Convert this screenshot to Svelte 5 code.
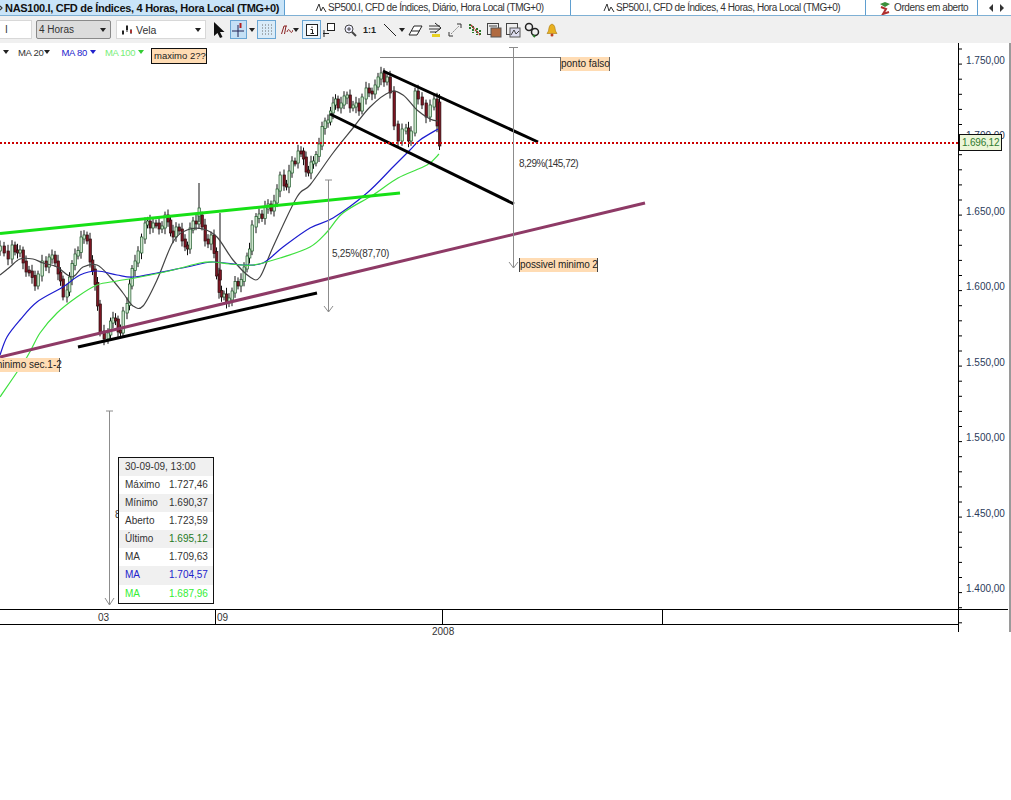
<script>
  const rawKeys = [[0,250],[4,247],[8,252],[12,258],[15,246],[20,252],[26,262],[32,272],[38,285],[42,275],[46,262],[52,258],[58,262],[63,280],[67,296],[72,278],[78,255],[84,238],[90,240],[95,270],[100,305],[104,332],[108,338],[113,322],[118,320],[123,332],[127,312],[132,285],[138,262],[145,238],[150,222],[156,224],[162,228],[168,216],[173,232],[179,228],[185,240],[190,248],[196,222],[202,216],[208,240],[214,236],[219,275],[224,296],[229,302],[235,292],[241,285],[247,268],[252,250],[256,226],[262,215],[268,208],[274,210],[280,190],[284,176],[289,186],[295,162],[301,152],[306,158],[311,172],[316,162],[322,145],[328,122],[333,112],[338,100],[344,104],[350,96],[356,106],[362,110],[366,98],[372,92],[378,86],[384,74],[390,78],[394,92],[398,125],[402,140],[406,130],[411,140],[415,132],[418,92],[422,98],[426,104],[430,116],[434,106],[437,100],[440,125]];
  const wob = [5,-3,6,-4,2,-6,4,-2];
  const keys = [];
  rawKeys.forEach((k, i) => {
    keys.push(k);
    const n = rawKeys[i + 1];
    if (n && n[0] - k[0] >= 5) keys.push([k[0] + (n[0] - k[0]) / 2, (k[1] + n[1]) / 2 + wob[i % 8]]);
  });
  const candles = [];
  for (let i = 0; i < keys.length - 1; i++) {
    const [x, y] = keys[i];
    const ny = keys[i + 1][1];
    const top = Math.min(y, ny) - 1;
    const bot = Math.max(y, ny) + 1;
    candles.push({ x, top, h: Math.max(bot - top, 3), hi: top - 2 - Math.abs(wob[i % 8]) * 0.7, lo: bot + 2 + Math.abs(wob[(i + 3) % 8]) * 0.7, up: ny < y });
  }
  candles.push({ x: 199, top: 208, h: 8, hi: 183, lo: 222, up: true });
  candles.push({ x: 220, top: 270, h: 10, hi: 213, lo: 280, up: false });
  candles.push({ x: 439.5, top: 102, h: 44, hi: 94, lo: 150, up: false });

  function smooth(a) {
    let d = `M${a[0][0]} ${a[0][1]}`;
    for (let i = 0; i < a.length - 1; i++) {
      const p0 = a[Math.max(i - 1, 0)], p1 = a[i], p2 = a[i + 1], p3 = a[Math.min(i + 2, a.length - 1)];
      const c1 = [p1[0] + (p2[0] - p0[0]) / 6, p1[1] + (p2[1] - p0[1]) / 6];
      const c2 = [p2[0] - (p3[0] - p1[0]) / 6, p2[1] - (p3[1] - p1[1]) / 6];
      d += `C${c1[0]} ${c1[1]} ${c2[0]} ${c2[1]} ${p2[0]} ${p2[1]}`;
    }
    return d;
  }
  const black = smooth([[0,275],[10,267],[20,259],[33,259],[43,263],[57,267],[72,277],[83,267],[97,265],[110,277],[123,293],[133,306],[143,306],[157,280],[173,242],[187,230],[203,229],[217,237],[233,260],[250,277],[260,277],[273,247],[297,197],[310,185],[333,153],[353,128],[370,107],[390,92],[403,95],[417,110],[430,119],[438,121]]);
  const blue = smooth([[0,355],[7,337],[20,320],[37,302],[63,287],[80,275],[97,271],[117,275],[133,277],[157,273],[187,267],[213,262],[243,265],[263,263],[283,247],[310,228],[333,218],[367,193],[393,167],[410,150],[420,140],[438,129]]);
  const green = smooth([[0,397],[27,357],[40,333],[57,313],[77,297],[97,285],[117,281],[140,277],[173,270],[200,263],[213,262],[230,264],[253,265],[280,258],[310,247],[327,232],[343,213],[373,195],[398,178],[427,165],[439,154]]);

  const ticks = [];
  for (let i = 0; i < 40; i++) ticks.push(6 + i * 15.1);
  const prices = [
    ['1.750,00', 60], ['1.650,00', 211], ['1.600,00', 286], ['1.550,00', 362],
    ['1.500,00', 437], ['1.450,00', 513], ['1.400,00', 588]
  ];
  const info = [
    ['Máximo', '1.727,46', ''], ['Mínimo', '1.690,37', ''], ['Aberto', '1.723,59', ''],
    ['Último', '1.695,12', 'g'], ['MA', '1.709,63', ''], ['MA', '1.704,57', 'b'], ['MA', '1.687,96', 'l']
  ];
</script>

<div class="app">
  <div class="tabs">
    <div class="tab active">
      <svg class="wave" viewBox="0 0 3 12" width="3" height="12"><path d="M0 4 L2 6 L0 8" fill="none" stroke="#333" stroke-width="1.200"/></svg>
      <span>NAS100.I, CFD de Índices, 4 Horas, Hora Local (TMG+0)</span>
    </div>
    <div class="tab t2">
      <svg viewBox="0 0 12 12" width="12" height="12"><path d="M1 9 L4 2 L6 9 L8 5 L11 10" fill="none" stroke="#333"/></svg>
      <span>SP500.I, CFD de Índices, Diário, Hora Local (TMG+0)</span>
    </div>
    <div class="tab t3">
      <svg viewBox="0 0 12 12" width="12" height="12"><path d="M1 9 L4 2 L6 9 L8 5 L11 10" fill="none" stroke="#333"/></svg>
      <span>SP500.I, CFD de Índices, 4 Horas, Hora Local (TMG+0)</span>
    </div>
    <div class="tab t4">
      <svg viewBox="0 0 14 14" width="14" height="14"><path d="M2 3 L7 1 L12 3 L7 6Z" fill="#3b8f3b"/><path d="M3 6 L8 8 L5 13 L11 11" fill="none" stroke="#b03030" stroke-width="2"/></svg>
      <span>Ordens em aberto</span>
    </div>
    <div class="nav">
      <svg viewBox="0 0 18 10" width="18" height="10"><path d="M5 1 V9 L1 5Z M12 1 V9 L16 5Z" fill="#333"/></svg>
    </div>
  </div>

  <div class="toolbar">
    <div class="field symbol">I</div>
    <div class="field tf"><span>4 Horas</span><i class="caret"></i></div>
    <div class="field kind">
      <svg viewBox="0 0 12 12" width="12" height="12"><path d="M2 6V11M6 1V8M10 5V10" stroke="#222" fill="none"/><path d="M1 7h2v3H1zM5 2h2v4H5z" fill="#222"/><path d="M9 6h2v3H9z" fill="#a33"/></svg>
      <span>Vela</span><i class="caret"></i>
    </div>
    <div class="icons">
      <svg class="ic ml2" viewBox="0 0 14 18" width="14" height="18"><path d="M2 1 V15 L5.500 12 L8 17 L10.500 16 L8 11 L12.500 11Z" fill="#111"/></svg>
      <button class="on cross ml4"><svg viewBox="0 0 15 16" width="15" height="16"><path d="M7 3V15M1 9H13" stroke="#225" fill="none"/><path d="M8.500 1h2v5h-2z" fill="#b02020"/></svg></button>
      <i class="caret small ml2"></i>
      <button class="on grid ml2"><svg viewBox="0 0 14 14" width="14" height="14"><path d="M2 2h10M2 5h10M2 8h10M2 11h10" stroke="#6a6a6a" stroke-dasharray="1 2" fill="none"/></svg></button>
      <svg class="ic ml5" viewBox="0 0 12 14" width="12" height="14"><path d="M0.500 11 L3 3 H6 M5 3 L3.500 11 M6 9 C7 6 8 6 9 8 S11 10 12 7" stroke="#8a2020" fill="none"/></svg>
      <i class="caret small"></i>
      <button class="on inf ml3"><svg viewBox="0 0 14 14" width="14" height="14"><rect x="1.500" y="1.500" width="11" height="11" fill="#fff" stroke="#222"/><path d="M7 3.500v1.500M5.500 6.500H7.500V10.500M5.500 10.500H9" stroke="#222" fill="none"/></svg></button>
      <svg class="ic ml1" viewBox="0 0 14 16" width="14" height="16"><rect x="5.500" y="1.500" width="7" height="7" fill="#fff" stroke="#222"/><path d="M2 15V8M1 11.500H7" stroke="#222" fill="none"/></svg>
      <svg class="ic ml7" viewBox="0 0 14 14" width="14" height="14"><circle cx="6" cy="6" r="4" fill="#eef" stroke="#444"/><path d="M9 9l4 4" stroke="#444" stroke-width="2"/><path d="M4 6h4M6 4v4" stroke="#444"/></svg>
      <span class="oneone ml6">1:1</span>
      <svg class="ic ml9" viewBox="0 0 16 16" width="16" height="16"><path d="M2 2L14 14" stroke="#222" fill="none"/></svg>
      <i class="caret small ml1"></i>
      <svg class="ic ml3" viewBox="0 0 16 14" width="16" height="14"><path d="M1 12 L6 3 H14 L9 12Z" fill="#fff" stroke="#222"/><path d="M3.500 8H11.500" stroke="#222"/></svg>
      <svg class="ic ml3" viewBox="0 0 16 16" width="16" height="16"><path d="M2 4h11M2 7h11M3 10h6" stroke="#333"/><path d="M8 1L14 6L8 11" fill="none" stroke="#222"/><path d="M5 12h8v3H5z" fill="#e8d020"/></svg>
      <svg class="ic ml4" viewBox="0 0 16 16" width="16" height="16"><path d="M4 12L12 4" stroke="#888" stroke-dasharray="2 1"/><path d="M10 2h4v4M2 10v4h4" fill="none" stroke="#333"/></svg>
      <svg class="ic ml4" viewBox="0 0 16 16" width="16" height="16"><path d="M3 2V8M6 4V11M10 6V13M13 8V14" stroke="#2a7a2a" stroke-width="2" stroke-dasharray="2 1"/><path d="M4 3L13 13" stroke="#b03030" stroke-width="1.500" stroke-dasharray="2 1"/></svg>
      <svg class="ic ml3" viewBox="0 0 16 16" width="16" height="16"><rect x="1.500" y="1.500" width="11" height="11" fill="#eee" stroke="#444"/><rect x="5" y="6" width="10" height="9" fill="#b06a40" stroke="#555"/><path d="M3 4h8" stroke="#444"/></svg>
      <svg class="ic ml3" viewBox="0 0 16 16" width="16" height="16"><rect x="1.500" y="1.500" width="11" height="11" fill="#eee" stroke="#444"/><rect x="5" y="6" width="10" height="9" fill="#dde" stroke="#555"/><path d="M6 13l3-5 2 4 3-3" stroke="#444" fill="none"/></svg>
      <svg class="ic ml3" viewBox="0 0 16 16" width="16" height="16"><circle cx="5" cy="5" r="3.500" fill="none" stroke="#222" stroke-width="1.500"/><circle cx="11" cy="10" r="3.500" fill="none" stroke="#222" stroke-width="1.500"/><path d="M9 13l2 2" stroke="#2a7a2a" stroke-width="2"/></svg>
      <svg class="ic ml5" viewBox="0 0 14 14" width="14" height="14"><path d="M7 1C4 2 4 5 3.500 8L2 10.500H12L10.500 8C10 5 10 2 7 1Z" fill="#e8b020" stroke="#a87810" stroke-width=".6"/><circle cx="7" cy="12" r="1.500" fill="#c04020"/></svg>
    </div>
  </div>

  <div class="chart">
    <svg class="plot" viewBox="0 43 1011 592" width="1011" height="592">
      <line class="thin" x1="380" y1="57.500" x2="560" y2="57.500" />
      {#each candles as c}
        <line x1={c.x} x2={c.x} y1={c.hi} y2={c.lo} stroke="#111" stroke-width="1" />
        <rect x={c.x - 1} y={c.top} width="2.400" height={c.h} fill={c.up ? '#cfe6cf' : '#7c1522'} stroke={c.up ? '#1f5a2a' : '#2a1010'} stroke-width=".7" />
      {/each}
      <path d={black} class="ma" stroke="#444444" />
      <path d={blue} class="ma" stroke="#1c1ccf" />
      <path d={green} class="ma" stroke="#3fe03f" />

      <line x1="0" y1="233.500" x2="400" y2="193" stroke="#16e016" stroke-width="3" />
      <line x1="0" y1="357" x2="645" y2="203" stroke="#8e3a66" stroke-width="3" />
      <line x1="78" y1="347" x2="317" y2="293" stroke="#000" stroke-width="3" />
      <line x1="383" y1="71" x2="538" y2="142" stroke="#000" stroke-width="3" />
      <line x1="330" y1="114" x2="514" y2="204" stroke="#000" stroke-width="3" />

      <line x1="0" y1="143" x2="958" y2="143" stroke="#cc0000" stroke-width="2" stroke-dasharray="2 2" />

      <g class="arrow">
        <path d="M513.500 47.500V268M509 47.500H518M509 262L513.500 268L518 262" />
        <path d="M328.500 180V312M325 180H332M324 306L328.500 312L333 306" />
        <path d="M109.500 411V605M106 411H113M105 598L109.500 605L114 598" />
      </g>

      <!-- price axis -->
      <line x1="958.500" y1="43" x2="958.500" y2="632" stroke="#000" />
      {#each ticks as t}
        <line x1="958" x2="962" y1={t + 43} y2={t + 43} stroke="#000" />
      {/each}
      {#each prices as p}
        <text x="966" y={p[1] + 4} class="price">{p[0]}</text>
      {/each}
      <text x="966" y="139" class="price">1.700,00</text>

      <!-- time axis -->
      <line x1="0" y1="609.500" x2="1008" y2="609.500" stroke="#000" />
      <line x1="0" y1="624.500" x2="958" y2="624.500" stroke="#000" />
      <line x1="215.500" y1="609" x2="215.500" y2="624" stroke="#000" />
      <line x1="442.500" y1="609" x2="442.500" y2="624" stroke="#000" />
      <line x1="662.500" y1="609" x2="662.500" y2="624" stroke="#000" />
      <text x="98" y="621" class="time">03</text>
      <text x="217" y="621" class="time">09</text>
      <text x="432" y="635" class="time">2008</text>
      <rect x="1009" y="43" width="2" height="589" fill="#9a9a9a" />
    </svg>

    <div class="legend">
      <i class="caret lead"></i>
      <span class="lg">MA 20</span><i class="caret c1"></i>
      <span class="lg blue">MA 80</span><i class="caret bc"></i>
      <span class="lg lime">MA 100</span><i class="caret lc"></i>
    </div>

    <div class="note n1">maximo 2??</div>
    <div class="note n2">ponto falso</div>
    <div class="note n3">possivel minimo 2</div>
    <div class="note n4">minimo sec.1-2</div>
    <div class="pctlabel p1">8,29%(145,72)</div>
    <div class="pctlabel p2">5,25%(87,70)</div>
    <div class="pctlabel p3">8</div>
    <div class="lastprice">1.696,12</div>

    <div class="info">
      <div class="date">30-09-09, 13:00</div>
      {#each info as r, i}
        <div class="row {r[2]}" class:alt={i % 2 === 1}>
          <span>{r[0]}</span><span class={r[2] === 'g' ? 'gv' : ''}>{r[1]}</span>
        </div>
      {/each}
    </div>
  </div>
</div>

<style>
  :global(body) { margin: 0; background: #fff; }
  .app { width: 1011px; height: 800px; overflow: hidden; font-family: "Liberation Sans", Arial, sans-serif; font-size: 11px; color: #222; }
  .tabs { display: flex; height: 15px; align-items: stretch; background: #fff; border-bottom: 1px solid #7eb0d4; }
  .tab { display: flex; align-items: center; gap: 1px; white-space: nowrap; box-sizing: border-box; border-right: 1px solid #5f9fd0; overflow: hidden; font-size: 10px; color: #333; }
  .tab svg { flex: none; }
  .tab.active { width: 285px; background: #c9e4f8; font-weight: 700; font-size: 11px; color: #111; gap: 2px; }
  .tab.active span { letter-spacing: -0.3px; }
  .t2 { width: 286px; padding-left: 30px; letter-spacing: -0.45px; }
  .t3 { width: 295px; padding-left: 32px; letter-spacing: -0.45px; }
  .t4 { width: 112px; padding-left: 12px; letter-spacing: -0.4px; gap: 2px; }
  .nav { flex: 1; display: flex; align-items: center; padding-left: 10px; overflow: hidden; }

  .toolbar { position: relative; height: 27px; background: #f0f0f0; display: flex; align-items: center; gap: 4px; font-size: 10px; }
  .field { height: 19px; box-sizing: border-box; display: flex; align-items: center; background: #fff; border: 1px solid #d8d8d8; color: #333; position: relative; }
  .symbol { width: 32px; padding-left: 5px; border-left: 0; }
  .tf { width: 75px; padding-left: 2px; background: #dcdcdc; border-color: #8a8a8a; border-radius: 2px; }
  .kind { width: 90px; margin-left: 1px; padding-left: 4px; gap: 3px; font-size: 10.500px; }
  .caret { position: absolute; right: 4px; top: 7px; width: 0; height: 0; border: 3px solid transparent; border-top: 4px solid #222; border-bottom: 0; }
  .icons { display: flex; align-items: center; height: 27px; }
  .icons .caret { position: static; flex: none; }
  .ic { flex: none; display: block; }
  .icons button { box-sizing: border-box; width: 19px; height: 19px; padding: 0; display: flex; align-items: center; justify-content: center; background: #d9ebf8; border: 1px solid #6aa6d4; flex: none; }
  .icons .cross { width: 17px; background: #c5e0f5; }
  .icons .inf { background: #e6f2fb; }
  .oneone { font-size: 9px; font-weight: 700; color: #222; width: 10px; flex: none; white-space: nowrap; }
  .icons .ml1 { margin-left: 1px; }
  .icons .ml2 { margin-left: 2px; }
  .icons .ml3 { margin-left: 3px; }
  .icons .ml4 { margin-left: 4px; }
  .icons .ml5 { margin-left: 5px; }
  .icons .ml6 { margin-left: 6px; }
  .icons .ml7 { margin-left: 7px; }
  .icons .ml9 { margin-left: 9px; }

  .chart { position: relative; height: 592px; background: #fff; }
  .plot { position: absolute; inset: 0; display: block; }
  .ma { fill: none; stroke-width: 1.200; stroke-linejoin: round; }
  .thin { stroke: #808080; stroke-width: 1; }
  .arrow path { fill: none; stroke: #8c8c8c; stroke-width: 1; }
  .price { font: 10px "Liberation Sans", Arial, sans-serif; fill: #2a3a5a; }
  .time { font: 10px "Liberation Sans", Arial, sans-serif; fill: #333; }

  .legend { position: absolute; left: 0; top: 2px; height: 14px; display: flex; align-items: center; font-size: 9.500px; letter-spacing: -0.3px; color: #333; }
  .lg { white-space: nowrap; }
  .legend .caret { position: static; flex: none; }
  .legend .lead { margin: 0 9px 0 3px; }
  .legend .c1 { margin: 0 11px 0 1px; }
  .blue { color: #2222cc; }
  .lime { color: #77ee77; }
  .legend .bc { border-top-color: #2222cc; margin: 0 9px 0 3px; }
  .legend .lc { border-top-color: #33cc33; margin: 0 0 0 3px; }

  .note { position: absolute; background: #ffdcb4; color: #222; font-size: 10px; line-height: 13px; height: 14px; white-space: nowrap; box-sizing: border-box; }
  .n1 { left: 151px; top: 5px; width: 56px; height: 16px; line-height: 14px; border: 1px solid #111; padding-left: 2px; font-size: 9.500px; }
  .n2 { left: 560px; top: 14px; width: 50px; padding-left: 0; border-left: 1px solid #666; border-right: 1px solid #666; }
  .n3 { left: 519px; top: 215px; width: 79px; padding-left: 0; border-left: 1px solid #444; border-right: 1px solid #444; letter-spacing: -0.1px; }
  .n4 { left: -6px; top: 315px; width: 66px; padding-left: 0; border-right: 1px solid #666; }
  .pctlabel { position: absolute; font-size: 10px; line-height: 12px; color: #333; white-space: nowrap; letter-spacing: -0.5px; }
  .p1 { left: 519px; top: 115px; }
  .p2 { left: 332px; top: 205px; letter-spacing: -0.25px; }
  .p3 { left: 115px; top: 466px; }
  .lastprice { position: absolute; left: 959px; top: 91px; width: 43px; height: 17px; box-sizing: border-box; border: 1px solid #111; background: #ecf6d8; color: #2f7a2f; font-size: 10px; line-height: 15px; padding-left: 2px; letter-spacing: -0.2px; }

  .info { position: absolute; left: 118px; top: 414px; width: 96px; box-sizing: border-box; border: 1px solid #111; background: #fff; font-size: 10px; color: #333; }
  .date { height: 18px; line-height: 18px; padding-left: 6px; background: #f0f0f0; }
  .row { display: grid; grid-template-columns: 44px 1fr; height: 18.100px; line-height: 18px; padding-left: 6px; }
  .row.alt { background: #f0f0f0; }
  .gv { color: #1f7a1f; }
  .row.b { color: #2222cc; }
  .row.l { color: #33ee33; }
</style>
